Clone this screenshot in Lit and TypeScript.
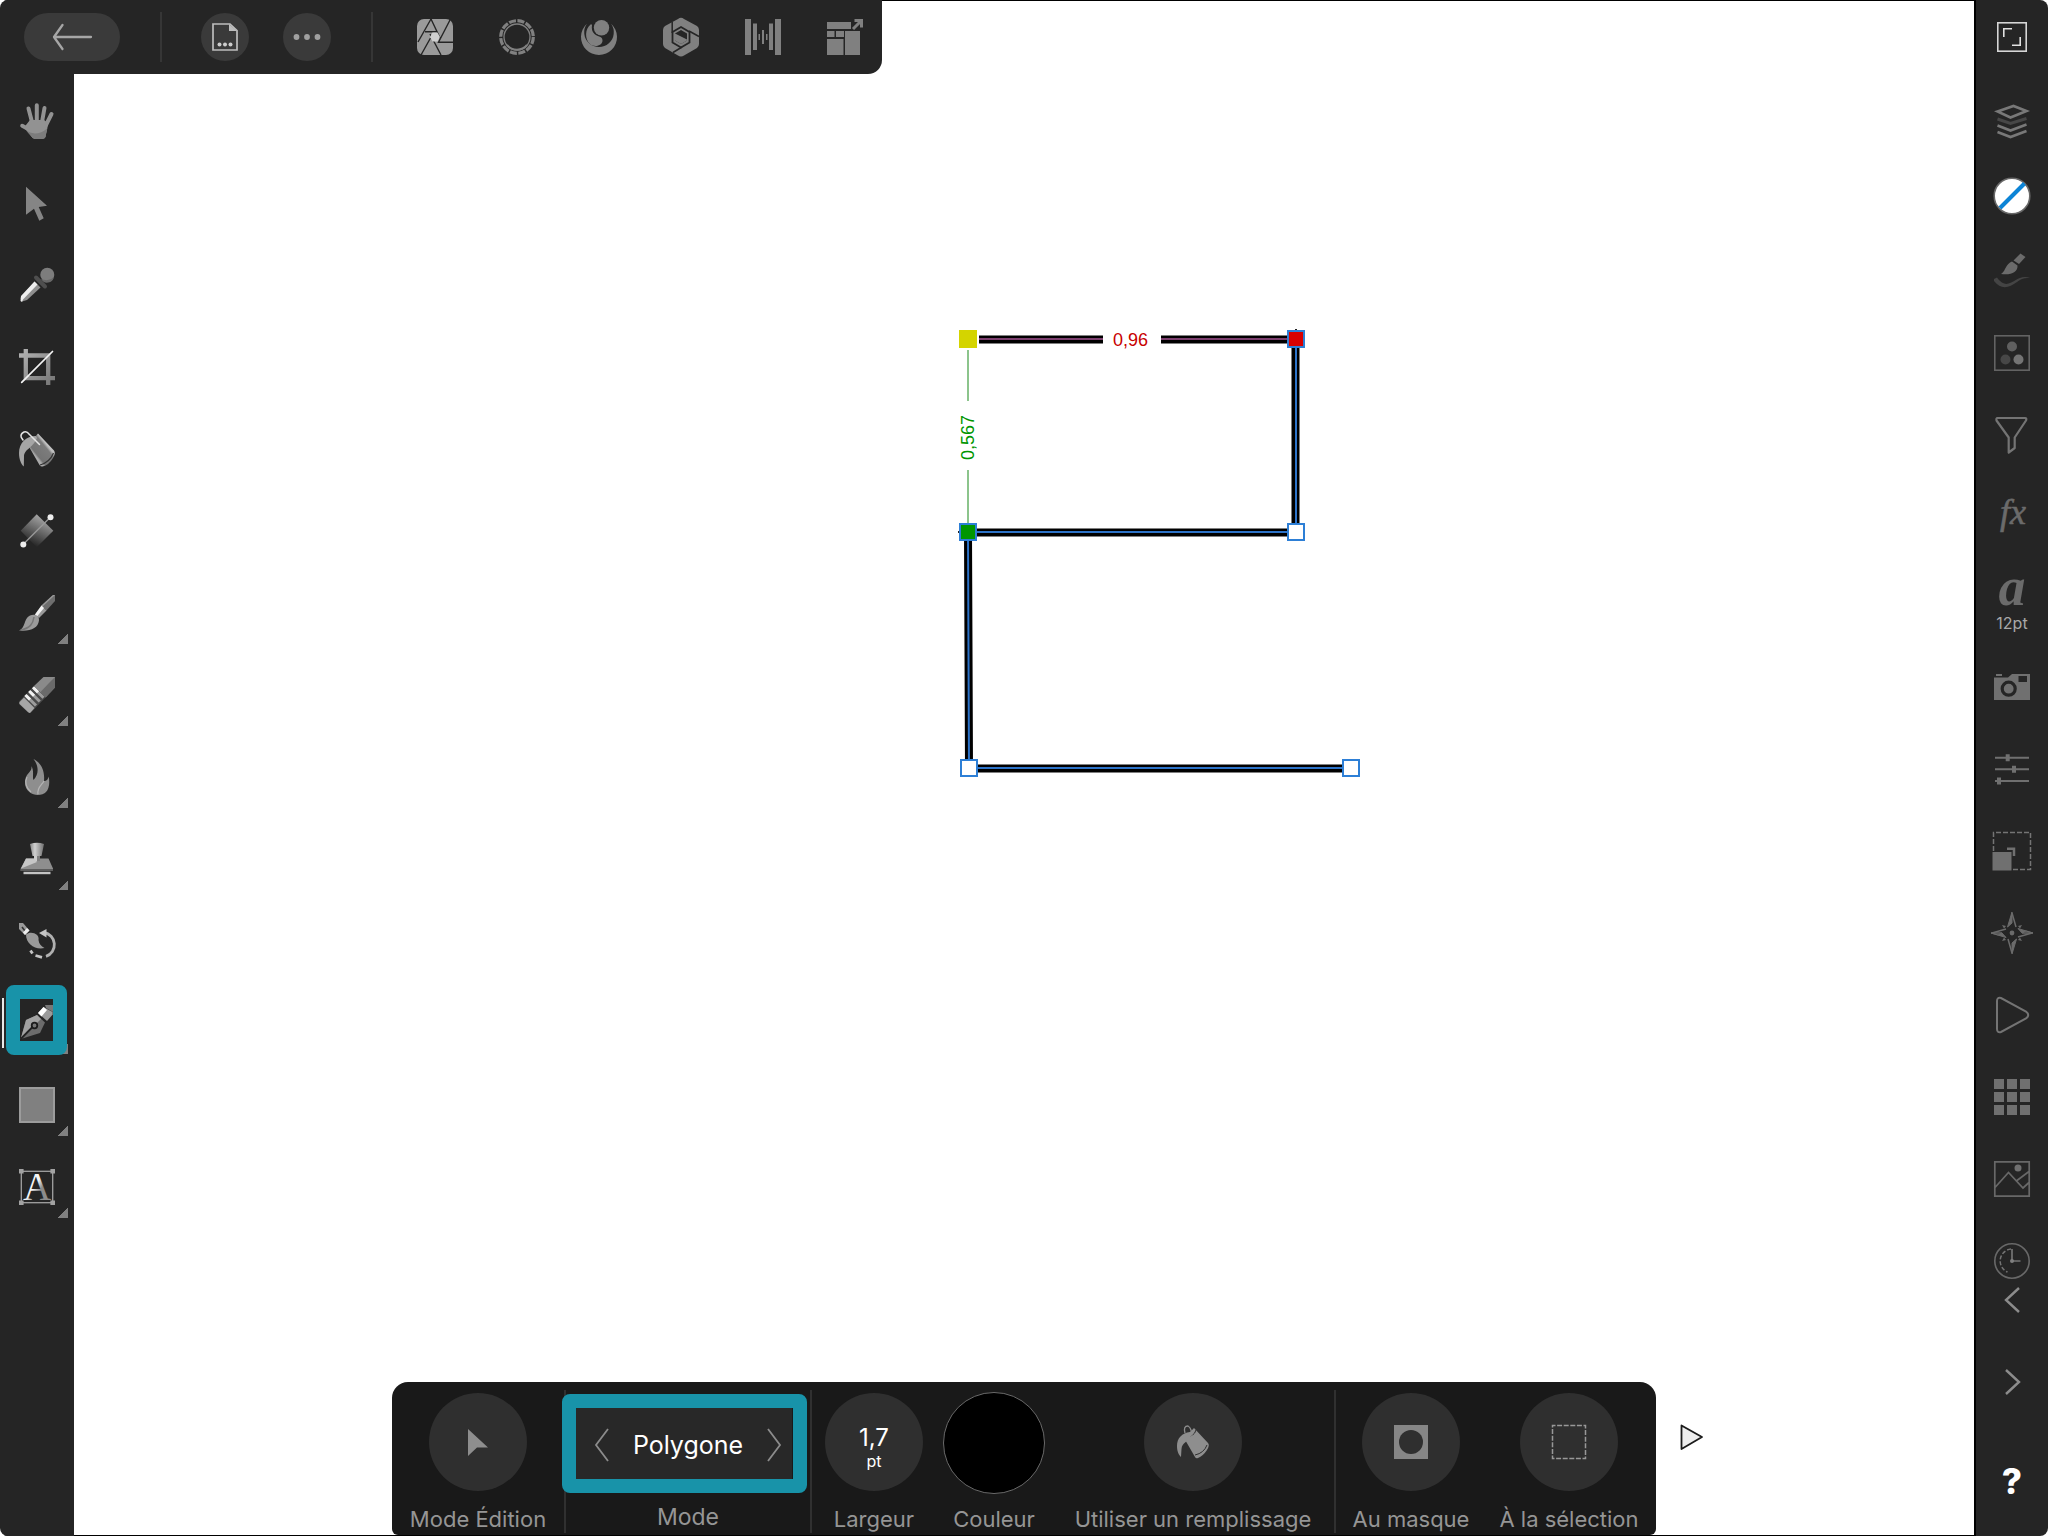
import { LitElement, html, svg, css, SVGTemplateResult, TemplateResult } from "lit";
import { customElement, state } from "lit/decorators.js";
import { classMap } from "lit/directives/class-map.js";

interface Item {
  id: string;
  label: string;
  art: SVGTemplateResult;
  size?: number;
  flyout?: boolean;
}

const BG = "#252525";

const personas: Item[] = [
  { id: "photo", label: "Photo", art: svg`
    <rect width="36" height="36" rx="7" fill="#9a9a9a"/>
    <path d="M14 0L1 23M14 0L23.500 20M33 1L21.500 23.300H36M13 15L24 36M13.500 19L4 36M8 12.700H20" fill="none" stroke="${BG}" stroke-width="1.400"/>
    <path d="M15.500 13.500H20.500L23 18L20.500 22.500H15.500L13 18Z" fill="#d0d0d0"/>` },
  { id: "liquify", label: "Fluidité", art: svg`
    <circle cx="18" cy="18" r="16.300" fill="none" stroke="#808080" stroke-width="3.200" stroke-dasharray="7 1.530"/>
    <circle cx="18" cy="18" r="13" fill="none" stroke="#808080" stroke-width="1.300"/>
    <path d="M8 26A13 13 0 0 0 28 26" fill="none" stroke="#808080" stroke-width="2"/>` },
  { id: "develop", label: "Développer", art: svg`
    <path d="M5.900 4.700A18 18 0 1 0 30.100 4.700A14.800 14.800 0 1 1 5.900 4.700Z" fill="#808080"/>
    <circle cx="20.500" cy="8.700" r="7.700" fill="#808080"/>
    <path d="M9.500 5.500C4 10 3.500 20 9 25C14 29 21.500 26.500 21.500 21.500C21.500 17 17 18 13.500 15C10.800 12.500 10.500 9.500 11 6Q10.500 4.800 9.500 5.500Z" fill="#808080"/>` },
  { id: "tone", label: "Tone Mapping", art: svg`
    <path d="M15 0Q18-2.500 21 0L34 7Q36 8.500 36 11V25Q36 27.500 34 29L21 36.500Q18 38.500 15 36.500L2 29Q0 27.500 0 25V11Q0 8.500 2 7Z" fill="#808080"/>
    <path d="M18 8L26.500 13V23.500L18 28.500L9.500 23.500V13Z" fill="#808080" stroke="${BG}" stroke-width="1.800"/>
    <path d="M18 11L24 14.500V21.500L18 25L12 21.500V14.500Z" fill="${BG}"/>
    <path d="M12 14.500L24 20.500V21.500L18 25L12 21.500Z" fill="#808080"/>
    <path d="M9.200 14V3M26 12L36 17.500M19 28L10 33.500" stroke="${BG}" stroke-width="1.500" fill="none"/>` },
  { id: "panorama", label: "Panorama", art: svg`
    <path d="M0 0H6V36H0ZM8 4.500H12V31H8ZM13.500 15H15V21H13.500ZM17 11H19V25H17ZM21 15H22.500V21H21ZM24 4.500H28V31H24ZM30 0H36V36H30Z" fill="#808080"/>` },
  { id: "export", label: "Exportation", art: svg`
    <path d="M0 3H24V10H0ZM0 12H7.500V18H0ZM9 12H17V18H9ZM0 20H16.500V36H0ZM18 12H33V36H18Z" fill="#808080"/>
    <path d="M26 10L33 3M27.500 1.500H34.500V8.500" stroke="#808080" stroke-width="3" fill="none"/>` },
];

const tools: Item[] = [
  { id: "hand", label: "Vue", art: svg`
    <path d="M9.500 5.500L13 19M17.800 2.200V18M25.500 5L23 19M32.500 11L27 22M3.200 22.800L11 27" stroke="#929292" stroke-width="4" stroke-linecap="round" fill="none"/>
    <path d="M11 17H25L29 20C28.500 27 27 30 26.500 34Q25.500 36 23 36H16Q13.500 36 12 33L5 24.500Z" fill="#929292"/>
    <path d="M7.500 28Q18 34 28.200 25.500L26.500 34Q25.500 36 23 36H16Q13.500 36 12 33Z" fill="#7c7c7c"/>` },
  { id: "move", label: "Déplacement", art: svg`
    <path d="M7 1.700L28 20.700L19.700 22L24.700 33.300L20.300 35.700L15 23.700L7 29.700Z" fill="#858585"/>` },
  { id: "picker", label: "Pipette", art: svg`
    <circle cx="28.300" cy="7.700" r="7" fill="#7d7d7d"/>
    <path d="M22 12A7 7 0 0 0 35 10Q30 15 22 12Z" fill="#686868"/>
    <path d="M15.500 14.500L21.500 20.500L8 33L3 34.500L1.500 31Z" fill="#8f8f8f"/>
    <path d="M15.500 14.500L18.500 17.500L4 32.500L3 35L1.500 34L2 29Z" fill="#eee"/>
    <path d="M17 10.500L26 19.500" stroke="#4e4e4e" stroke-width="4" stroke-linecap="round"/>` },
  { id: "crop", label: "Rogner", art: svg`
    <path d="M0 6.500H29.200V36M6.800 0V29.200H36" fill="none" stroke="url(#crop)" stroke-width="4.300"/>
    <path d="M2.700 33.300L33.500 2.500" stroke="#f4f4f4" stroke-width="1.700" stroke-linecap="round"/>` },
  { id: "fill", label: "Remplissage", art: svg`
    <path d="M9 14L19 2.500L35 19.500Q37 22 34 27Q30 34 23.500 35.500Q22 36 20.500 34Z" fill="url(#can)"/>
    <path d="M34.500 22Q31 31 21 34" stroke="#333" stroke-width="1.200" fill="none"/>
    <path d="M17 5C7 5 0 12 0 22C0 28 2 33 4.800 35.500L5 26C5 18 13 18 18 7Z" fill="#a5a5a5"/>
    <path d="M4 9L2.300 6.500Q1 3 5 1Q8 0 10 3L20.500 13.500" fill="none" stroke="#e4e4e4" stroke-width="1.500" stroke-linecap="round"/>` },
  { id: "gradient", label: "Dégradé", art: svg`
    <path d="M17.700 1.300L34.300 17.700L17.700 34.300L1.700 17.700Z" fill="url(#fade)"/>
    <path d="M4.300 31.300L31.300 4.300" stroke="#9a9a9a" stroke-width="1.300"/>
    <circle cx="4.300" cy="31.500" r="3" fill="#eee"/><circle cx="31.500" cy="4.300" r="3" fill="#eee"/>` },
  { id: "brush", label: "Pinceau", flyout: true, art: svg`
    <path d="M34 0H36V6L27.500 15.500L22.500 10.500Z" fill="#6e6e6e"/><path d="M34 0H36L23.500 11.500L22.500 10.500Z" fill="#999"/>
    <path d="M22.500 10.500L27.500 15.500L20 23L16 19.500Z" fill="#999"/><path d="M22.500 10.500L25 13L18 21.500L16 19.500Z" fill="#f2f2f2"/>
    <path d="M0 35.500C7 33 4 24 11 20.500C15 18.500 20.500 20 20 25.500C19 33 12 36.500 0 35.500Z" fill="#9b9b9b"/>
    <path d="M2 35C11 33 14 29 15 22" fill="none" stroke="#777" stroke-width="1.500"/>` },
  { id: "erase", label: "Gomme", flyout: true, art: svg`
    <path d="M24.500 0H36V10.500L26.500 20.500L15 9Z" fill="#8a8a8a"/><path d="M30 6L36 0V10.500L26.500 20.500L21.500 15Z" fill="#6a6a6a"/>
    <path d="M15 9L26.500 20.500L11.500 36L8.500 35L0 27V24.500Z" fill="#4a4a4a"/>
    <path d="M5 20.500L15.500 31L11.500 35.500Q10.500 36.500 9 35L.6 27Q0 26 .6 25Z" fill="#a6a6a6"/>
    <path d="M15 11.200L24.500 20.700M11.200 15L20.700 24.500M7.200 18.700L17 28.500" stroke="#9c9c9c" stroke-width="3"/>
    <path d="M14 10.200L19 15.200M10.200 14L15 18.800M6.400 18L11 22.500" stroke="#f2f2f2" stroke-width="3"/>` },
  { id: "burn", label: "Densité", flyout: true, art: svg`
    <path d="M14.500 0C22 4 26 11 25 22C28 22 29 20 29.700 17.500C31 24 30 30 27 33C24 36.500 15 37 11 33.500C6 30 4.500 23 7.500 17C9.500 13 13 12 12.500 7C15.500 13 13 18 14.500 21C20 15 20 7 14.500 0Z" fill="#8e8e8e"/>
    <path d="M25 22C23 26 18 28 19 35" fill="none" stroke="#b5b5b5" stroke-width="1.200"/>
    <path d="M8 18C5.500 23 7 29 12 33" fill="none" stroke="#b5b5b5" stroke-width="1.200"/>` },
  { id: "clone", label: "Duplication", flyout: true, art: svg`
    <path d="M11 3Q18 .5 25 3L22.500 15H13.500Z" fill="url(#knob)"/><path d="M15 15H21V20H15Z" fill="#808080"/><path d="M15 15H18V20H15Z" fill="#ccc"/>
    <path d="M7 17.500H15V20H21V17.500H29.500L34 27.500V30H1.700V27.500Z" fill="#8e8e8e"/><path d="M7 17.500H15L18 21L2 27.500Z" fill="#c6c6c6"/>
    <path d="M1.700 28H34V30H1.700Z" fill="#5c5c5c"/><path d="M4.500 30.800H31.500V33.200H4.500Z" fill="#c4c4c4"/>` },
  { id: "undo", label: "Pinceau d’historique", art: svg`
    <path d="M0 0H4L10.500 7.500L6 12L0 6Z" fill="#9a9a9a"/><path d="M3 4L6 8" stroke="#333" stroke-width="1.500"/><path d="M8 5L10.500 7.500L6 12L4 9.500Z" fill="#eee"/>
    <path d="M7 11.500C12 7.500 21 11 19.500 17C20 21 22 23 25.500 25C16 27 7 21 7 11.500Z" fill="#9a9a9a"/>
    <path d="M25 9.500A12.300 12.300 0 0 1 27 33.300" fill="none" stroke="#b0b0b0" stroke-width="2.800"/>
    <path d="M20 10L27.500 6V14.500Z" fill="#c4c4c4"/>
    <path d="M23 34.300L16.500 32.500M13.500 30.500L11.500 27.500" fill="none" stroke="#c4c4c4" stroke-width="2.800"/>` },
  { id: "pen", label: "Plume", flyout: true, art: svg`
    <path d="M24.500 2L33.700 7V9.500L28 16L19 8Z" fill="#9a9a9a"/><path d="M24.500 2L28 5L22.500 11.500L19 8Z" fill="#fff"/><path d="M26 0H34V7L27 3Z" fill="#777"/>
    <path d="M1.700 34L7 15L18 10L26 17.500L21 28Z" fill="#6c6c6c"/><path d="M1.700 34L7 15L18 10L22 14Z" fill="#a2a2a2"/>
    <path d="M1.700 34L14.500 21" stroke="#222" stroke-width="1.800"/><circle cx="15.500" cy="20.500" r="2.800" fill="#777" stroke="#1c1c1c" stroke-width="1.800"/>` },
  { id: "shape", label: "Rectangle", flyout: true, art: svg`
    <rect x="1" y="1" width="34" height="34" fill="#808080" stroke="#9c9c9c" stroke-width="2"/>` },
  { id: "text", label: "Texte", flyout: true, art: svg`
    <rect x="2.300" y="2.300" width="31.400" height="31.400" fill="none" stroke="#a2a2a2" stroke-width="1.300"/>
    <path d="M0 0H4.600V4.600H0ZM31.400 0H36V4.600H31.400ZM0 31.400H4.600V36H0ZM31.400 31.400H36V36H31.400Z" fill="#a2a2a2"/>
    <text x="18" y="31" text-anchor="middle" font-family="'Liberation Serif', serif" font-size="39" fill="url(#letter)">A</text>` },
];

const studios: Item[] = [
  { id: "layers", label: "Calques", art: svg`
    <path d="M3.500 8.500L19.500 3L32.500 8L16.500 14.500Z" fill="none" stroke="#787878" stroke-width="2.600"/>
    <path d="M3.500 16L16.500 20.500L32.500 15.500" fill="none" stroke="#474747" stroke-width="3"/>
    <path d="M3.500 22.500L16.500 27.500L32.500 21.500M3.500 29L16.500 34L32.500 28" fill="none" stroke="#787878" stroke-width="2.600"/>` },
  { id: "color", label: "Couleur", size: 38, art: svg`
    <circle cx="19" cy="19" r="17.800" fill="#fff" stroke="#686868" stroke-width="1.600"/>
    <path d="M7 31L31.500 6.500" stroke="#0c84d6" stroke-width="4"/>` },
  { id: "brushes", label: "Pinceaux", art: svg`
    <path d="M26.500 .5L31.500 4L25 11L19.500 7.500Z" fill="#6b6b6b"/>
    <path d="M7 21C11 19 11 13 16 9.500L18 8.500L23.500 12.500C24 19 17 22.500 7 21Z" fill="#6b6b6b"/>
    <path d="M0 26L3 24.500C10 34 15 31 21 27.500C26 24 31 23 36 25C30 24.500 27 26 23 29C15 35 7 37 0 28Z" fill="#444"/>` },
  { id: "swatches", label: "Nuancier", art: svg`
    <rect x=".8" y=".8" width="34.400" height="34.400" fill="none" stroke="#636363" stroke-width="1.600"/>
    <circle cx="18" cy="11.500" r="5" fill="#606060"/><circle cx="11.500" cy="24.500" r="5" fill="#474747"/><circle cx="24.500" cy="24.500" r="5" fill="#747474"/>` },
  { id: "filters", label: "Filtres", art: svg`
    <path d="M3.500 1H31Q33 1 32 3.500L20.700 20.500V31L14.700 35.500V20.500L2.500 3.500Q2 1 3.500 1Z" fill="none" stroke="#747474" stroke-width="2.200" stroke-linejoin="round"/>` },
  { id: "fx", label: "Effets", art: svg`
    <text x="19" y="25" text-anchor="middle" font-family="'Liberation Serif', serif" font-style="italic" font-size="36" fill="#6b6b6b" stroke="#6b6b6b" stroke-width=".6">fx</text>` },
  { id: "font", label: "Texte", art: svg`` },
  { id: "camera", label: "Photothèque", art: svg`
    <path d="M0 8.500H14L18 5H36V31H0Z" fill="#707070"/><path d="M2 5H8V7H2Z" fill="#707070"/>
    <circle cx="14.700" cy="19.700" r="6.500" fill="#707070" stroke="${BG}" stroke-width="3.200"/><path d="M24.500 7H33V13H24.500Z" fill="${BG}"/>` },
  { id: "adjust", label: "Réglages", art: svg`
    <path d="M1 6.700H35M1 18.300H35M1 30H35" stroke="#707070" stroke-width="2"/>
    <path d="M11.700 3.200H15.700V10.200H11.700ZM18 14.800H22V21.800H18ZM3 26.500H7V33.500H3Z" fill="#707070"/>` },
  { id: "transform", label: "Transformation", size: 40, art: svg`
    <path d="M1.500 20V1.500H38.500V38.500H20" fill="none" stroke="#747474" stroke-width="1.500" stroke-dasharray="5 2"/>
    <rect x=".5" y="21" width="19" height="18.500" fill="#707070"/><path d="M15 17.700H22V25" fill="none" stroke="#707070" stroke-width="2.500"/>` },
  { id: "navigator", label: "Navigateur", size: 44, art: svg`
    <path d="M22 2L26 16M22 42L18 28M42 22L28 26M2 22L16 18" stroke="#6b6b6b" stroke-width="1.500" fill="none"/>
    <path d="M22 1L17.500 16L22 12ZM22 43L26.500 28L22 32ZM43 22L28 17.500L32 22ZM1 22L16 26.500L12 22ZM1 22H12L8 24ZM43 22H32L36 20Z" fill="#6b6b6b" stroke="#6b6b6b"/>
    <path d="M12 14L16 15L14 17.500ZM32 14L28 15L30 17.500ZM12 30L16 29L14 26.500ZM32 30L28 29L30 26.500Z" fill="#6b6b6b"/>
    <circle cx="22" cy="22" r="2.400" fill="#6b6b6b"/>` },
  { id: "macro", label: "Macros", art: svg`
    <path d="M3 4Q3 0 7 1L32 14.500Q36.500 18 32 21.500L7 35Q3 36 3 32Z" fill="none" stroke="#747474" stroke-width="2"/>` },
  { id: "assets", label: "Ressources", art: svg`
    <path d="M0 0H10V10H0ZM13 0H23V10H13ZM26 0H36V10H26ZM0 13H10V23H0ZM13 13H23V23H13ZM26 13H36V23H26ZM0 26H10V36H0ZM13 26H23V36H13ZM26 26H36V36H26Z" fill="#707070"/>` },
  { id: "stock", label: "Stock", art: svg`
    <path d="M.8.8H35.200V35.200H.8ZM1 26.500L14.500 11.500L29 27L35 21.500M23 19.500L35 10.500" fill="none" stroke="#686868" stroke-width="1.700"/>
    <circle cx="24" cy="7" r="3.500" fill="#707070"/>` },
  { id: "history", label: "Historique", art: svg`
    <circle cx="18" cy="18" r="17.200" fill="none" stroke="#686868" stroke-width="1.600"/>
    <path d="M18 6V18H26.500" fill="none" stroke="#747474" stroke-width="1.700"/><circle cx="18" cy="18" r="2" fill="#808080"/>
    <path d="M17 6A12 12 0 0 0 13.500 29" fill="none" stroke="#747474" stroke-width="1.500" stroke-dasharray="4 2"/>` },
];

const icon = (art: SVGTemplateResult, w = 36, h = w): TemplateResult => html`
  <svg width="${w}" height="${h}" viewBox="0 0 ${w} ${h}" aria-hidden="true">${art}</svg>`;

@customElement("app-root")
export class AppRoot extends LitElement {
  static styles = css`
    :host {
      display: block;
      font-family: Inter, "Liberation Sans", sans-serif;
      background: #fff;
    }
    * { box-sizing: border-box; }
    svg { display: block; overflow: visible; flex: none; }
    button {
      border: 0; padding: 0; margin: 0; background: none; color: inherit;
      font: inherit; cursor: pointer;
      display: flex; align-items: center; justify-content: center;
    }
    .app {
      display: grid;
      grid-template: 74px 1fr auto / 74px 1fr 74px;
      min-height: 100vh;
      position: relative;
      border-radius: 8px;
      overflow: hidden;
      background: #fff;
    }
    .defs { position: absolute; }
    .canvas {
      grid-area: 1 / 1 / -1 / 3;
      position: relative;
      border-top: 1px solid #000;
      border-bottom: 1px solid #000;
    }
    .drawing { position: absolute; left: 940px; top: 309px; }
    .measure { font-family: "Liberation Sans", sans-serif; font-size: 18px; }

    .top {
      grid-area: 1 / 1 / 2 / 3;
      justify-self: start;
      position: relative;
      display: flex; align-items: center; gap: 40px;
      padding: 0 19px 0 24px;
      background: #252525;
      border-radius: 0 0 14px 0;
    }
    .back { width: 96px; height: 48px; border-radius: 24px; background: #3a3a3a; }
    .rule { width: 2px; height: 50px; margin-right: -1px; background: #363636; }
    .docs { display: flex; gap: 34px; }
    .round { width: 48px; height: 48px; border-radius: 50%; background: #3a3a3a; }
    .personas { display: flex; gap: 46px; padding-left: 5px; }

    .tools {
      grid-area: 2 / 1 / 4 / 2;
      position: relative;
      display: flex; flex-direction: column;
      padding-top: 6px;
      background: #252525;
    }
    .tool { height: 82px; position: relative; }
    .flyout::after {
      content: ""; position: absolute; right: 6px; bottom: 10px;
      width: 10px; height: 10px;
      background: linear-gradient(135deg, transparent 50%, #808080 50%);
    }
    .active::before {
      content: ""; position: absolute; left: 2px; top: 16px;
      width: 2px; height: 50px; background: #e8e8e8;
    }
    .frame {
      position: absolute; z-index: 1;
      border: 14px solid #1893a9; border-radius: 8px;
      pointer-events: none;
    }
    .frame-tool { left: 6px; top: 3px; width: 61px; height: 70px; }

    .studio {
      grid-area: 1 / 3 / -1 / 4;
      display: flex; flex-direction: column;
      background: #252525;
      border-left: 2px solid #000;
      color: #fff;
    }
    .panel { height: 82px; }
    .expand { height: 80px; padding-bottom: 6px; }
    .panel-color { height: 68px; }
    .panel-history { height: 60px; padding-top: 22px; }
    .panel-font { height: 88px; flex-direction: column; color: #6b6b6b; }
    .glyph {
      font: italic 700 54px/32px "Liberation Serif", serif;
      height: 42px;
    }
    .points { font-size: 16px; line-height: 20px; color: #a8a8a8; }
    .pager {
      display: flex; flex-direction: column; gap: 42px;
      padding-bottom: 35px;
    }
    .page { height: 40px; }
    .help { height: 40px; margin-top: 17px; font-size: 35px; font-weight: 800; }

    .context {
      grid-area: 3 / 2 / 4 / 3;
      justify-self: center;
      position: relative;
      display: grid;
      grid-template-columns: 172px 2px 244px 2px 124px 116px 282px 2px 150px 166px;
      height: 153px;
      padding-right: 4px;
      margin-bottom: 1px;
      background: #191919;
      border-radius: 16px 16px 6px 6px;
      color: #959595;
      font-size: 22px; line-height: 28px;
    }
    .cell { display: flex; flex-direction: column; align-items: center; justify-content: space-between; padding: 11px 0 2px; white-space: nowrap; }
    .disc { width: 98px; height: 98px; border-radius: 50%; background: #2f2f2f; flex-direction: column; }
    .swatch { width: 102px; background: #000; border: 1px solid #6a6a6a; height: 102px; margin: -1px 0; }
    .split { background: #303030; margin: 8px 0 2px; }
    .value { color: #fff; font-size: 24px; line-height: 26px; padding-top: 12px; }
    .unit { color: #fff; font-size: 16px; line-height: 20px; }
    .mode { position: relative; font-size: 23px; padding-bottom: 4px; }
    .stepper {
      display: flex; align-items: center; justify-content: space-between;
      width: 216px; height: 72px; margin: 15px 8px 0 0; padding: 2px 10px 0 18px;
      background: #282828; color: #fff; font-size: 25px;
    }
    .frame-mode { left: -4px; top: 12px; width: 245px; height: 99px; }
    .play { position: absolute; left: calc(100% + 24px); top: 42px; }
  `;

  @state() private tool = "pen";
  @state() private modes = ["Plume", "Intelligent", "Polygone", "Ligne"];
  @state() private mode = 2;

  private step(by: number) {
    this.mode = (this.mode + by + this.modes.length) % this.modes.length;
  }

  private renderDefs() {
    return html`<svg class="defs" width="0" height="0" aria-hidden="true"><defs>
      <linearGradient id="crop" x1="0" y1="0" x2="1" y2="1"><stop stop-color="#b4b4b4"/><stop offset="1" stop-color="#747474"/></linearGradient>
      <linearGradient id="can" x1="0" y1="1" x2="1" y2="0"><stop offset=".3" stop-color="#aaa"/><stop offset=".35" stop-color="#747474"/><stop offset=".62" stop-color="#7c7c7c"/><stop offset=".68" stop-color="#c0c0c0"/></linearGradient>
      <linearGradient id="fade" x1=".75" y1=".1" x2=".35" y2=".9"><stop stop-color="#a8a8a8"/><stop offset="1" stop-color="#282828"/></linearGradient>
      <linearGradient id="knob"><stop stop-color="#888"/><stop offset=".35" stop-color="#d0d0d0"/><stop offset="1" stop-color="#707070"/></linearGradient>
      <linearGradient id="letter" x1="0" y1="0" x2="1" y2="1"><stop offset=".45" stop-color="#f6f6f6"/><stop offset=".6" stop-color="#8c8c8c"/></linearGradient>
    </defs></svg>`;
  }

  private renderTools() {
    return html`<nav class="tools" aria-label="Outils">
      ${tools.map((t) => html`
        <button class=${classMap({ tool: true, flyout: !!t.flyout, active: t.id === this.tool })}
          aria-label=${t.label} aria-pressed=${t.id === this.tool} @click=${() => (this.tool = t.id)}>
          ${icon(t.art)}
          ${t.id === this.tool ? html`<span class="frame frame-tool"></span>` : null}
        </button>`)}
    </nav>`;
  }

  private renderCanvas() {
    const node = (x: number, y: number, fill: string) => svg`
      <rect x=${x + 1} y=${y + 1} width="16" height="16" fill=${fill} stroke="#2d7fd6" stroke-width="2"/>`;
    return html`<main class="canvas">
      <svg class="drawing" width="440" height="490" viewBox="0 0 440 490" role="img" aria-label="Tracé">
        <g stroke="#000" stroke-width="8">
          <path d="M39 29.500H163M221 29.500H348M355.500 29V213M356 222.500H28M28 222L29 458.500H404" fill="none"/>
        </g>
        <path d="M39 29H163M221 29H348" stroke="#7d3f6e" stroke-width="2"/>
        <path d="M356 29V213M348 222H28M28 222L29 458H404" fill="none" stroke="#2d73c8" stroke-width="2"/>
        <path d="M28 40V91M28 160V213" stroke="#8cc48c" stroke-width="2"/>
        <path d="M355 19H357V20H355ZM18 221H19V223H18Z" fill="#222"/>
        <rect x="19" y="20" width="18" height="18" fill="#d4d400"/>
        ${node(347, 20, "#d80000")}${node(347, 213, "#fff")}${node(19, 213, "#009600")}
        ${node(20, 449, "#fff")}${node(402, 449, "#fff")}
        <text class="measure" x="190.500" y="36" text-anchor="middle" fill="#c80000">0,96</text>
        <text class="measure" x="-127.500" y="34" text-anchor="middle" transform="rotate(-90)" fill="#009600">0,567</text>
      </svg>
    </main>`;
  }

  private renderStudio() {
    return html`<aside class="studio" aria-label="Studio">
      <button class="expand" aria-label="Plein écran">${icon(svg`
        <rect x=".8" y=".8" width="28.400" height="28.400" fill="none" stroke="#d6d6d6" stroke-width="1.600"/>
        <path d="M6.800 15V6.800H15M23.200 15V23.200H15" fill="none" stroke="#e0e0e0" stroke-width="1.600"/>`, 30)}</button>
      ${studios.map((s) => s.id === "font"
        ? html`<button class="panel panel-font" aria-label=${s.label}><span class="glyph">a</span><span class="points">12pt</span></button>`
        : html`<button class="panel panel-${s.id}" aria-label=${s.label}>${icon(s.art, s.size ?? 36)}</button>`)}
      <div class="pager">
        <button class="page" aria-label="Précédent">${icon(svg`<path d="M15 1L2 13L15 25" fill="none" stroke="#8c8c8c" stroke-width="2.400"/>`, 16, 26)}</button>
        <button class="page" aria-label="Suivant">${icon(svg`<path d="M2 1L15 13L2 25" fill="none" stroke="#8c8c8c" stroke-width="2.400"/>`, 16, 26)}</button>
        <button class="help" aria-label="Aide">?</button>
      </div>
    </aside>`;
  }

  private renderContext() {
    return html`<section class="context" aria-label="Options de l’outil">
      <div class="cell">
        <button class="disc" aria-labelledby="l-edit">${icon(svg`<path d="M8 5L28 23.500H17L8 32Z" fill="#8e8e8e"/>`)}</button>
        <span id="l-edit">Mode Édition</span>
      </div>
      <div class="split"></div>
      <div class="cell mode">
        <div class="stepper" role="group" aria-labelledby="l-mode">
          <button aria-label="Mode précédent" @click=${() => this.step(-1)}>${icon(svg`<path d="M14 1L2 17L14 33" fill="none" stroke="#8c8c8c" stroke-width="1.800"/>`, 15, 34)}</button>
          <output>${this.modes[this.mode]}</output>
          <button aria-label="Mode suivant" @click=${() => this.step(1)}>${icon(svg`<path d="M1 1L13 17L1 33" fill="none" stroke="#8c8c8c" stroke-width="1.800"/>`, 15, 34)}</button>
        </div>
        <span class="frame frame-mode"></span>
        <span id="l-mode">Mode</span>
      </div>
      <div class="split"></div>
      <div class="cell">
        <button class="disc" aria-describedby="l-width"><span class="value">1,7</span><span class="unit">pt</span></button>
        <span id="l-width">Largeur</span>
      </div>
      <div class="cell">
        <button class="disc swatch" aria-labelledby="l-color"></button>
        <span id="l-color">Couleur</span>
      </div>
      <div class="cell">
        <button class="disc" aria-labelledby="l-fill">${icon(svg`
          <path d="M9 14L19 4L33 19Q35 21 32 26Q28 32 23 34Q21 35 20 33Z" fill="#8e8e8e"/>
          <path d="M32 21Q29 29 20 31M11 12.500Q19 13 21 6" stroke="#2f2f2f" stroke-width="1" fill="none"/>
          <path d="M15 8C7 9 2 14 2 22C2 28 4 31 6 33L6.500 25C7 18 13 19 17 10Z" fill="#8e8e8e"/>
          <path d="M10 9Q8 2 13 2Q15 3 16 6L17 12" fill="none" stroke="#8e8e8e" stroke-width="1.300"/>`)}</button>
        <span id="l-fill">Utiliser un remplissage</span>
      </div>
      <div class="split"></div>
      <div class="cell">
        <button class="disc" aria-labelledby="l-mask">${icon(svg`
          <rect x="1" y="1" width="34" height="34" fill="#868686"/><circle cx="18" cy="18" r="12" fill="#2f2f2f"/>`)}</button>
        <span id="l-mask">Au masque</span>
      </div>
      <div class="cell">
        <button class="disc" aria-labelledby="l-select">${icon(svg`
          <rect x="1.500" y="1.500" width="33" height="33" fill="none" stroke="#989898" stroke-width="1.500" stroke-dasharray="5 1.600" stroke-dashoffset="2"/>`)}</button>
        <span id="l-select">À la sélection</span>
      </div>
      <button class="play" aria-label="Lire">${icon(svg`
        <path d="M1.500 1.500L22 13L1.500 25Z" fill="#eee" stroke="#1c1c1c" stroke-width="1.800" stroke-linejoin="round"/>`, 24, 27)}</button>
    </section>`;
  }

  render() {
    return html`<div class="app">
      ${this.renderDefs()}
      ${this.renderCanvas()}
      <header class="top">
        <button class="back" aria-label="Retour">${icon(svg`
          <path d="M2 14H39M10.500 2L2 14L10.500 26" fill="none" stroke="#a6a6a6" stroke-width="2.300" stroke-linecap="round" stroke-linejoin="round"/>`, 40, 28)}</button>
        <span class="rule"></span>
        <div class="docs">
          <button class="round" aria-label="Document">${icon(svg`
            <path d="M1 1H18L25 7.500V27H1Z" fill="none" stroke="#bdbdbd" stroke-width="1.700"/><path d="M17 1L25 8H17Z" fill="#bdbdbd"/>
            <circle cx="7.500" cy="21.500" r="2" fill="#ccc"/><circle cx="13" cy="21.500" r="2" fill="#ccc"/><circle cx="18.500" cy="21.500" r="2" fill="#ccc"/>`, 26, 28)}</button>
          <button class="round" aria-label="Plus">${icon(svg`
            <circle cx="3.500" cy="4" r="2.900" fill="#a0a0a0"/><circle cx="14" cy="4" r="2.900" fill="#a0a0a0"/><circle cx="24.500" cy="4" r="2.900" fill="#a0a0a0"/>`, 28, 8)}</button>
        </div>
        <span class="rule"></span>
        <div class="personas">
          ${personas.map((p) => html`<button aria-label=${p.label}>${icon(p.art)}</button>`)}
        </div>
      </header>
      ${this.renderTools()}
      ${this.renderStudio()}
      ${this.renderContext()}
    </div>`;
  }
}
